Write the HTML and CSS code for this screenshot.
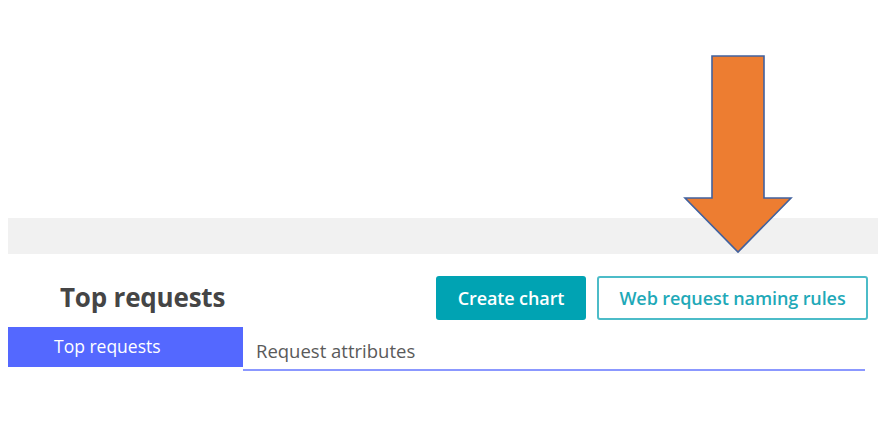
FILE: index.html
```html
<!DOCTYPE html>
<html>
<head>
<meta charset="utf-8">
<link rel="stylesheet" href="styles.css">
</head>
<body>
<div class="page">
  <div class="top-space"></div>
  <div class="band"></div>
  <div class="header">
    <h1 class="title">Top requests</h1>
    <div class="actions">
      <button class="btn btn-primary">Create chart</button>
      <button class="btn btn-outline">Web request naming rules</button>
    </div>
  </div>
  <div class="tabs">
    <div class="tab tab-active">Top requests</div>
    <div class="tab tab-rest">Request attributes</div>
  </div>
  <svg class="arrow" width="112" height="200" viewBox="0 0 112 200">
    <polygon points="30,1 82,1 82,143 109,143 56,197 3,143 30,143" fill="#ED7D31" stroke="#41619E" stroke-width="1.6" stroke-linejoin="miter"/>
  </svg>
</div>
</body>
</html>
```

FILE: styles.css
```css
html, body {
  margin: 0;
  padding: 0;
  background: #ffffff;
}
.page {
  position: relative;
  width: 889px;
  height: 429px;
  font-family: "Open Sans", "Noto Sans", sans-serif;
}
.top-space {
  height: 218px;
}
.band {
  margin-left: 8px;
  width: 870px;
  height: 36px;
  background: #f1f1f1;
}
.header {
  display: flex;
  align-items: center;
  justify-content: space-between;
  height: 44px;
  margin-top: 22px;
  padding-left: 60px;
  padding-right: 21px;
}
.title {
  margin: 0;
  font-size: 26px;
  font-weight: 700;
  color: #454545;
  letter-spacing: -0.2px;
  padding-bottom: 2px;
}
.actions {
  display: flex;
  gap: 11px;
}
.btn {
  font-family: "Open Sans", "Noto Sans", sans-serif;
  font-size: 18px;
  font-weight: 600;
  height: 44px;
  border-radius: 3px;
  box-sizing: border-box;
  padding: 0;
  letter-spacing: -0.1px;
}
.btn-primary {
  width: 150px;
  background: #00a3b3;
  color: #ffffff;
  border: none;
}
.btn-outline {
  width: 271px;
  background: #ffffff;
  color: #1fa9b8;
  border: 2px solid #4cbcc8;
}
.tabs {
  display: flex;
  margin-top: 7px;
  margin-left: 8px;
}
.tab {
  height: 40px;
  box-sizing: border-box;
  display: flex;
  align-items: center;
}
.tab-active {
  width: 235px;
  background: #5468ff;
  color: #ffffff;
  font-size: 17.5px;
  padding-left: 46px;
  padding-bottom: 2px;
}
.tab-rest {
  width: 622px;
  height: 44px;
  color: #5a5a5a;
  font-size: 18.5px;
  padding-left: 13px;
  padding-top: 4px;
  border-bottom: 2px solid #8b98ff;
}
.arrow {
  position: absolute;
  left: 682px;
  top: 55px;
}
```
